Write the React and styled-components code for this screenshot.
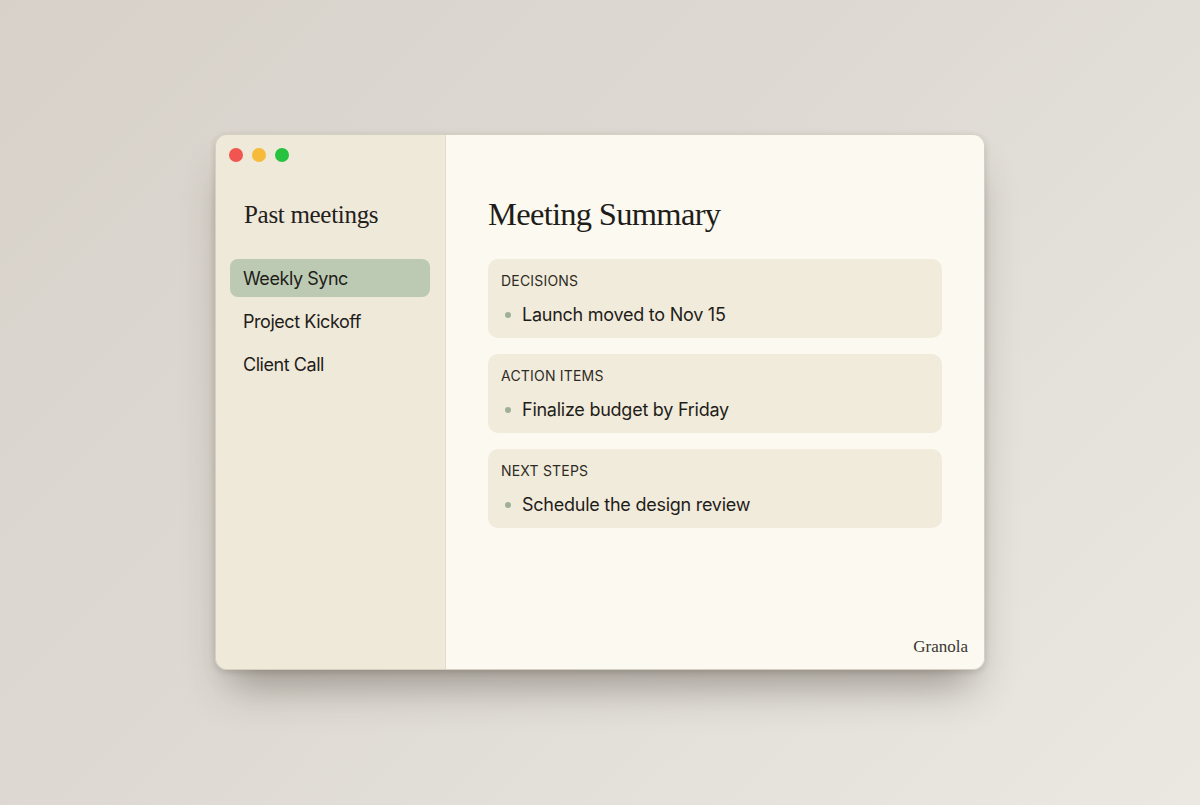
import React from 'react';
import styled, { createGlobalStyle } from 'styled-components';

const GlobalStyle = createGlobalStyle`
  html, body {
    margin: 0;
    padding: 0;
  }
  body {
    font-family: Inter, "Liberation Sans", sans-serif;
    color: #1f1d19;
  }
`;

const Page = styled.div`
  width: 1200px;
  height: 805px;
  display: flex;
  align-items: flex-start;
  justify-content: center;
  padding-top: 134px;
  box-sizing: border-box;
  background: linear-gradient(135deg, #d7d1c9 0%, #dedad3 45%, #ebe8e2 100%);
`;

const Window = styled.div`
  width: 770px;
  height: 536px;
  display: flex;
  border-radius: 12px;
  overflow: hidden;
  box-shadow: 0 28px 40px -14px rgba(60, 52, 40, 0.45), 0 2px 6px rgba(60, 52, 40, 0.18);
  border: 1px solid #d6d0c2;
  box-sizing: border-box;
`;

const Sidebar = styled.aside`
  width: 230px;
  flex-shrink: 0;
  background: #efe9da;
  border-right: 1px solid #e2dccd;
  padding: 13px 15px 0 13px;
  box-sizing: border-box;
  display: flex;
  flex-direction: column;
`;

const Lights = styled.div`
  display: flex;
  gap: 9px;
`;

const Light = styled.span`
  width: 14px;
  height: 14px;
  border-radius: 50%;
  background: ${p => p.color};
`;

const SideTitle = styled.h2`
  margin: 38px 0 0 15px;
  font-family: "Liberation Serif", "DejaVu Serif", serif;
  font-weight: 400;
  font-size: 25px;
  line-height: 30px;
  letter-spacing: -0.3px;
  color: #22201b;
`;

const NavList = styled.nav`
  margin: 29px 0 0 1px;
  display: flex;
  flex-direction: column;
  gap: 5px;
`;

const NavItem = styled.div`
  height: 38px;
  display: flex;
  align-items: center;
  padding-left: 13px;
  border-radius: 8px;
  font-size: 18px;
  letter-spacing: -0.45px;
  background: ${p => (p.active ? '#bccab3' : 'transparent')};
  color: #1f1d19;
`;

const Main = styled.main`
  flex: 1;
  position: relative;
  background: #fbf9f0;
  padding: 59px 42px 0 42px;
  box-sizing: border-box;
`;

const Title = styled.h1`
  margin: 0;
  font-family: "Liberation Serif", "DejaVu Serif", serif;
  font-weight: 400;
  font-size: 32.5px;
  line-height: 40px;
  letter-spacing: -0.7px;
  color: #1f1d19;
`;

const Cards = styled.div`
  margin-top: 25px;
  display: flex;
  flex-direction: column;
  gap: 16px;
  width: 454px;
`;

const Card = styled.section`
  height: 79px;
  box-sizing: border-box;
  background: #f1ebdc;
  border-radius: 10px;
  padding: 13px 13px 0 13px;
`;

const Label = styled.div`
  font-size: 14px;
  line-height: 18px;
  letter-spacing: 0.2px;
  color: #2e2b25;
`;

const Item = styled.div`
  margin-top: 14px;
  display: flex;
  align-items: center;
  font-size: 18px;
  line-height: 22px;
  letter-spacing: -0.25px;
  color: #1f1d19;
`;

const Dot = styled.span`
  width: 6px;
  height: 6px;
  border-radius: 50%;
  background: #9fb096;
  margin: 0 11px 0 4px;
`;

const Brand = styled.div`
  position: absolute;
  right: 16px;
  bottom: 12px;
  font-family: "Liberation Serif", "DejaVu Serif", serif;
  font-size: 17px;
  color: #3a3731;
`;

const sections = [
  { label: 'DECISIONS', item: 'Launch moved to Nov 15' },
  { label: 'ACTION ITEMS', item: 'Finalize budget by Friday' },
  { label: 'NEXT STEPS', item: 'Schedule the design review' },
];

const meetings = ['Weekly Sync', 'Project Kickoff', 'Client Call'];

export default function App() {
  return (
    <>
      <GlobalStyle />
      <Page>
        <Window>
          <Sidebar>
            <Lights>
              <Light color="#f0564f" />
              <Light color="#f6bb3a" />
              <Light color="#27c23f" />
            </Lights>
            <SideTitle>Past meetings</SideTitle>
            <NavList>
              {meetings.map((m, i) => (
                <NavItem key={m} active={i === 0}>{m}</NavItem>
              ))}
            </NavList>
          </Sidebar>
          <Main>
            <Title>Meeting Summary</Title>
            <Cards>
              {sections.map(s => (
                <Card key={s.label}>
                  <Label>{s.label}</Label>
                  <Item><Dot />{s.item}</Item>
                </Card>
              ))}
            </Cards>
            <Brand>Granola</Brand>
          </Main>
        </Window>
      </Page>
    </>
  );
}
